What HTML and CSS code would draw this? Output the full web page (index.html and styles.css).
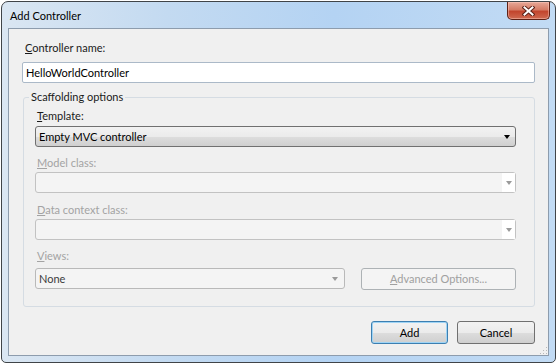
FILE: index.html
```html
<!DOCTYPE html>
<html lang="en">

<head>
  <meta charset="UTF-8">
  <title>Add Controller</title>
  <link rel="stylesheet" href="styles.css">
</head>

<body>

  <div class="window">
    <div class="titlebar">
      <span class="title">Add Controller</span>
      <span class="close-btn">
        <svg width="13" height="10" viewBox="0 0 13 10">
          <path d="M2.5 1.5 L10.5 8.5 M10.5 1.5 L2.5 8.5" stroke="#5b2218" stroke-width="4" stroke-linecap="square" fill="none" />
          <path d="M2.5 1.5 L10.5 8.5 M10.5 1.5 L2.5 8.5" stroke="#ffffff" stroke-width="2" stroke-linecap="square" fill="none" />
        </svg>
      </span>
    </div>

    <div class="client">
      <div class="field-label"><u>C</u>ontroller name:</div>
      <div class="textbox">HelloWorldController</div>

      <fieldset class="group">
        <legend>Scaffolding options</legend>

        <div class="field-label"><u>T</u>emplate:</div>
        <div class="combo combo-template">
          <span>Empty MVC controller</span>
          <span class="arrow"></span>
        </div>

        <div class="field-label disabled model-label"><u>M</u>odel class:</div>
        <div class="combo combo-disabled">
          <span></span>
          <span class="drop"><span class="arrow"></span></span>
        </div>

        <div class="field-label disabled data-label"><u>D</u>ata context class:</div>
        <div class="combo combo-disabled">
          <span></span>
          <span class="drop"><span class="arrow"></span></span>
        </div>

        <div class="field-label disabled views-label"><u>V</u>iews:</div>
        <div class="views-row">
          <div class="combo combo-views">
            <span>None</span>
            <span class="arrow"></span>
          </div>
          <button class="btn btn-advanced"><u>A</u>dvanced Options...</button>
        </div>
      </fieldset>

      <div class="actions">
        <button class="btn btn-default">Add</button>
        <button class="btn btn-cancel">Cancel</button>
      </div>

      <svg class="grip" width="10" height="10" viewBox="0 0 10 10">
        <rect x="8" y="2" width="1" height="1" fill="#b8b8b8" />
        <rect x="5" y="5" width="1" height="1" fill="#b8b8b8" />
        <rect x="8" y="5" width="1" height="1" fill="#b8b8b8" />
        <rect x="2" y="8" width="1" height="1" fill="#b8b8b8" />
        <rect x="5" y="8" width="1" height="1" fill="#b8b8b8" />
        <rect x="8" y="8" width="1" height="1" fill="#b8b8b8" />
      </svg>
    </div>
  </div>

</body>

</html>
```

FILE: styles.css
```css
* {
  box-sizing: border-box;
  margin: 0;
  padding: 0;
  font-family: Lato, "Open Sans", sans-serif;
}

body {
  background-color: #ffffff;
  width: 558px;
  height: 364px;
}

.window {
  position: relative;
  display: flex;
  flex-direction: column;
  width: 555px;
  height: 362px;
  margin: 1px 0 0 1px;
  border: 1px solid #404448;
  border-radius: 7px 7px 5px 5px;
  padding: 0 6px 6px 6px;
  background: linear-gradient(to right, #dae6f2 0%, #c3daf1 30%, #b4d3f3 60%, #c2dbf4 100%);
}

.titlebar {
  display: flex;
  justify-content: space-between;
  align-items: flex-start;
  height: 26px;
  padding-left: 2px;
}

.title {
  font-size: 11px;
  line-height: 16px;
  padding-top: 6px;
  color: #000;
}

.close-btn {
  display: flex;
  justify-content: center;
  align-items: center;
  width: 43px;
  height: 18px;
  margin-right: -1px;
  border: 1px solid #5e2216;
  border-top: none;
  border-radius: 0 0 5px 5px;
  background: linear-gradient(#e7a898 0%, #d57c66 45%, #c2452d 55%, #cf6a51 100%);
  box-shadow: inset 0 0 0 1px rgba(255, 210, 200, 0.45);
}

.client {
  position: relative;
  flex: 1;
  background: #f0f0f0;
  border: 1px solid #8d9cad;
  padding: 11px 13px 0 13px;
}

.field-label {
  font-size: 11px;
  line-height: 16px;
  color: #1a1a1a;
  padding-left: 3px;
}

.field-label.disabled {
  color: #a3a3a3;
}

.textbox {
  margin-top: 6px;
  height: 21px;
  border: 1px solid #abb9c8;
  border-radius: 2px;
  background: #ffffff;
  font-size: 11px;
  line-height: 19px;
  padding-left: 3px;
  color: #000;
}

.group {
  margin: 6px 0 0 1px;
  border: 1px solid #d5dce3;
  border-radius: 3px;
  padding: 3px 18px 16px 11px;
}

.group legend {
  font-size: 11px;
  line-height: 16px;
  padding: 0 2px;
  margin-left: -6px;
  color: #1a1a1a;
}

.group .field-label {
  padding-left: 2px;
}

.combo {
  display: flex;
  justify-content: space-between;
  align-items: center;
  height: 21px;
  border-radius: 3px;
  font-size: 11px;
  padding-left: 3px;
}

.combo-template {
  margin-top: 2px;
  border: 1px solid #707070;
  background: linear-gradient(#f2f2f2 0%, #ebebeb 50%, #dddddd 51%, #cfcfcf 100%);
  color: #000;
  padding-right: 5px;
}

.arrow {
  width: 0;
  height: 0;
  border-left: 3.5px solid transparent;
  border-right: 3.5px solid transparent;
  border-top: 4px solid #000;
}

.model-label {
  margin-top: 8px;
}

.data-label {
  margin-top: 9px;
}

.views-label {
  margin-top: 8px;
}

.combo-disabled {
  margin-top: 1px;
  border: 1px solid #c2c2c2;
  background: #f4f4f4;
  padding-right: 0;
}

.drop {
  display: flex;
  justify-content: center;
  align-items: center;
  width: 13px;
  height: 19px;
  background: #ffffff;
}

.combo-disabled .arrow,
.combo-views .arrow {
  border-top-color: #9a9a9a;
}

.views-row {
  display: flex;
  justify-content: space-between;
  align-items: flex-start;
  margin-top: 4px;
}

.combo-views {
  width: 310px;
  border: 1px solid #b9b9b9;
  background: #f4f4f4;
  color: #3c3c3c;
  padding-right: 6px;
}

.btn {
  height: 23px;
  border-radius: 3px;
  font-size: 11px;
  line-height: 20px;
  color: #000;
  border: 1px solid #707070;
  background: linear-gradient(#f2f2f2 0%, #ebebeb 50%, #dddddd 51%, #cfcfcf 100%);
}

.btn-advanced {
  width: 155px;
  height: 22px;
  border-color: #adb2b5;
  background: #f4f4f4;
  color: #a0a0a0;
}

.actions {
  display: flex;
  justify-content: flex-end;
  gap: 9px;
  margin-top: 14px;
}

.btn-default {
  width: 77px;
  border-color: #3c7fb1;
  box-shadow: inset 0 0 0 1px #9fd4f5;
}

.btn-cancel {
  width: 78px;
}

.grip {
  position: absolute;
  right: 0;
  bottom: 0;
}
```
